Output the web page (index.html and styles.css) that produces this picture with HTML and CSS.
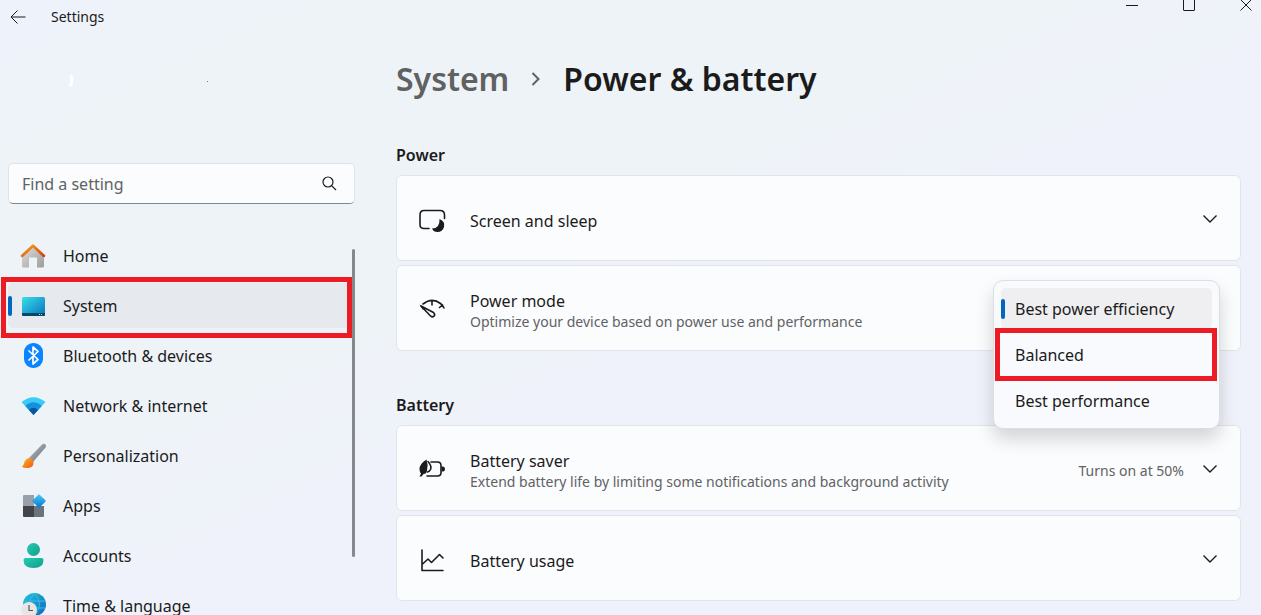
FILE: index.html
```html
<!DOCTYPE html>
<html lang="en">
<head>
    <meta charset="UTF-8">
    <meta name="viewport" content="width=device-width, initial-scale=1.0">
    <title>Settings</title>
    <link rel="stylesheet" href="styles.css">
</head>
<body>
    <header class="titlebar">
        <button class="back-btn" aria-label="Back">
            <svg width="16" height="14" viewBox="0 0 16 14"><path d="M15.500 7H1M7.500 .5L1 7l6.500 6.500" /></svg>
        </button>
        <span class="app-name">Settings</span>
        <div class="window-controls">
            <button aria-label="Minimize"><svg width="12" height="12" viewBox="0 0 12 12"><path d="M0 5.500h12" /></svg></button>
            <button aria-label="Maximize"><svg width="12" height="12" viewBox="0 0 12 12"><rect x=".5" y="-.5" width="11" height="11" rx=".5" /></svg></button>
            <button aria-label="Close"><svg width="12" height="12" viewBox="0 0 12 12"><path d="M.5 -.5l11 11M11.500 -.5l-11 11" /></svg></button>
        </div>
    </header>

    <div class="layout">
        <aside class="sidebar">
            <div class="profile">
                <svg width="200" height="14" viewBox="0 0 200 14" aria-hidden="true">
                    <path d="M62.500 1q3 5-.5 11" fill="none" stroke="#fff" stroke-width="3" />
                    <rect x="199" y="7" width="1" height="1" fill="#777" />
                </svg>
            </div>

            <div class="search">
                <input type="text" placeholder="Find a setting" aria-label="Find a setting">
                <button aria-label="Search">
                    <svg width="15" height="15" viewBox="0 0 15 15"><circle cx="6" cy="6" r="5" /><path d="M9.800 9.800l4.200 4.200" /></svg>
                </button>
            </div>

            <nav class="nav">
                <a class="nav-item" href="#home">
                    <svg width="26" height="26" viewBox="0 0 26 26">
                        <defs>
                            <linearGradient id="wall" x1="0" y1="0" x2="1" y2="1"><stop offset="0" stop-color="#e2e2e2" /><stop offset="1" stop-color="#9b9b9b" /></linearGradient>
                            <linearGradient id="roof" x1="0" y1="0" x2="1" y2="1"><stop offset="0" stop-color="#f6a61c" /><stop offset="1" stop-color="#cf4210" /></linearGradient>
                        </defs>
                        <path d="M2 12L13 2l11 10v11q0 1.500-1.500 1.500H17v-10H9v10H3.500Q2 24.500 2 23z" fill="url(#wall)" />
                        <path d="M2.200 12.800L13 2.800l10.800 10" fill="none" stroke="url(#roof)" stroke-width="2.800" stroke-linecap="round" stroke-linejoin="round" />
                    </svg>
                    Home
                </a>
                <div class="nav-current">
                    <a class="nav-item active" href="#system" aria-current="page">
                        <svg width="26" height="26" viewBox="0 0 26 26">
                            <defs>
                                <linearGradient id="screen" x1="0" y1="0" x2="1" y2="1"><stop offset="0" stop-color="#36dfe9" /><stop offset="1" stop-color="#0c71bd" /></linearGradient>
                            </defs>
                            <rect x="2" y="4" width="23" height="19" rx="1.500" fill="url(#screen)" />
                            <path d="M2 20h23v1.500q0 1.500-1.500 1.500h-20Q2 23 2 21.500z" fill="#074768" />
                            <path d="M19 21h1v1h-1zM21 21h1v1h-1z" fill="#9ee8f5" />
                        </svg>
                        System
                    </a>
                    <div class="highlight"></div>
                </div>
                <a class="nav-item" href="#bluetooth">
                    <svg width="26" height="26" viewBox="0 0 26 26">
                        <rect x="4" y="0" width="19" height="25" rx="9" fill="#0a84ff" />
                        <path d="M9 8l9 8.500-5 4.500V4l5 4.500L9 17" fill="none" stroke="#fff" stroke-width="1.700" stroke-linejoin="round" stroke-linecap="round" />
                    </svg>
                    Bluetooth &amp; devices
                </a>
                <a class="nav-item" href="#network">
                    <svg width="26" height="26" viewBox="0 0 26 26">
                        <path d="M1.500 9Q13.500 -.5 25.500 9L13.500 22z" fill="#3accf5" />
                        <path d="M5.300 13Q13.500 5.500 21.700 13L13.500 22z" fill="#1490df" />
                        <path d="M9 17q4.500-4.500 9 0l-4.500 5z" fill="#0b559f" />
                    </svg>
                    Network &amp; internet
                </a>
                <a class="nav-item" href="#personalization">
                    <svg width="26" height="26" viewBox="0 0 26 26">
                        <defs>
                            <linearGradient id="handle" x1="0" y1="0" x2="1" y2="1"><stop offset="0" stop-color="#c2c7ce" /><stop offset="1" stop-color="#5f6670" /></linearGradient>
                            <linearGradient id="bristle" x1="0" y1="0" x2="1" y2="1"><stop offset="0" stop-color="#fdbd22" /><stop offset="1" stop-color="#ee5519" /></linearGradient>
                        </defs>
                        <path d="M8.500 15.500L22 1.500q2-1.500 3.500 0 1 1.500 0 3L13 19q-1-3-4.500-3.500z" fill="url(#handle)" />
                        <path d="M9.500 15q4 .5 4 4.500 0 5-5.500 5.500-3.500.5-6.500-1.500 2-.5 2.500-3 1-5 5.500-5.500z" fill="url(#bristle)" />
                    </svg>
                    Personalization
                </a>
                <a class="nav-item" href="#apps">
                    <svg width="26" height="26" viewBox="0 0 26 26">
                        <defs>
                            <linearGradient id="tile" x1="0" y1="0" x2="1" y2="1"><stop offset="0" stop-color="#45d0f4" /><stop offset="1" stop-color="#0872d4" /></linearGradient>
                        </defs>
                        <path d="M3 3q0-1 1-1h10v11H3z" fill="#98a1aa" />
                        <path d="M3 13h11v11H4q-1 0-1-1z" fill="#414549" />
                        <path d="M14 13h10v10q0 1-1 1h-9z" fill="#6b737c" />
                        <rect x="14" y="3" width="10" height="10" rx="1" transform="rotate(45 19 8)" fill="url(#tile)" />
                    </svg>
                    Apps
                </a>
                <a class="nav-item" href="#accounts">
                    <svg width="26" height="26" viewBox="0 0 26 26">
                        <defs>
                            <linearGradient id="person" x1="0" y1="0" x2="1" y2="1"><stop offset="0" stop-color="#25cbb4" /><stop offset="1" stop-color="#109f87" /></linearGradient>
                        </defs>
                        <circle cx="13.500" cy="6.500" r="6.500" fill="url(#person)" />
                        <path d="M5.500 15h16q2 0 2 2 0 8-10 8t-10-8q0-2 2-2z" fill="url(#person)" />
                    </svg>
                    Accounts
                </a>
                <a class="nav-item" href="#time">
                    <svg width="26" height="26" viewBox="0 0 26 26">
                        <defs>
                            <linearGradient id="globe" x1="0" y1="0" x2="1" y2="1"><stop offset="0" stop-color="#25c4dc" /><stop offset="1" stop-color="#0e66bd" /></linearGradient>
                        </defs>
                        <circle cx="14.500" cy="11.500" r="11.500" fill="url(#globe)" />
                        <path d="M4 8h21M4 15h21M14.500 0q-10 11.500 0 23M14.500 0q10 11.500 0 23" fill="none" stroke="#35bfe0" />
                        <circle cx="9" cy="17" r="8" fill="#e6e6e6" />
                        <path d="M9 12v5.500h4" fill="none" stroke="#555" stroke-width="1.200" />
                    </svg>
                    Time &amp; language
                </a>
                <div class="scroll-thumb"></div>
            </nav>
        </aside>

        <main class="content">
            <h1 class="breadcrumb">
                <a href="#system">System</a>
                <svg width="10" height="14" viewBox="0 0 10 14" aria-hidden="true"><path d="M1.500 1l6 6-6 6" /></svg>
                <span>Power &amp; battery</span>
            </h1>

            <section class="group">
                <h2>Power</h2>
                <button class="card">
                    <svg class="card-icon" width="28" height="28" viewBox="0 0 28 28">
                        <path d="M11 21.500H6Q2 21.500 2 17.500V8q0-4.500 4-4.500h16q4.500 0 4.500 4.500v3.500" />
                        <path d="M21.500 12q6 2.500 4.500 8-1.500 5-6.500 5-4 0-5.500-3.500 8 0 7.500-9.500z" class="solid" />
                    </svg>
                    <span class="card-text"><span class="card-title">Screen and sleep</span></span>
                    <svg class="chevron" width="14" height="8" viewBox="0 0 14 8"><path d="M.5 .5L7 7l6.500-6.500" /></svg>
                </button>
                <div class="card">
                    <svg class="card-icon" width="28" height="28" viewBox="0 0 28 28">
                        <path d="M5 7Q14 0 22.500 6.500q2 1.500 3.500 4.500M14 3.500V8M24.500 8l-3 2.500" />
                        <path d="M3 9l12.500 6.500q2 2 .5 3.700-2 1.500-3.700-.5z" />
                        <path d="M1.500 7.500l3 5L9 12z" class="solid" />
                    </svg>
                    <div class="card-text">
                        <span class="card-title">Power mode</span>
                        <span class="card-desc">Optimize your device based on power use and performance</span>
                    </div>
                    <div class="menu" role="listbox" aria-label="Power mode">
                        <button class="option selected" role="option" aria-selected="true">Best power efficiency</button>
                        <button class="option" role="option" aria-selected="false">Balanced</button>
                        <button class="option" role="option" aria-selected="false">Best performance</button>
                        <div class="highlight"></div>
                    </div>
                </div>
            </section>

            <section class="group">
                <h2>Battery</h2>
                <button class="card">
                    <svg class="card-icon" width="28" height="28" viewBox="0 0 28 28">
                        <path d="M13 5h6.500Q23 5 23 8.500v7q0 3.500-3.500 3.500H9" />
                        <path d="M23.500 9.500H25q2 0 2 2.500t-2 2.500h-1.500z" class="solid" />
                        <path d="M8.500 2.500Q1.500 7 1.500 12q0 3 1.500 4.500L1.500 19.500h2l2-2.500q3 0 3.500-3.500Q10.500 8 8.500 2.500z" class="solid" />
                        <path d="M10 4.500q4 4.500 2.500 8-1 2-3 2.500" />
                    </svg>
                    <span class="card-text">
                        <span class="card-title">Battery saver</span>
                        <span class="card-desc">Extend battery life by limiting some notifications and background activity</span>
                    </span>
                    <span class="card-value">Turns on at 50%</span>
                    <svg class="chevron" width="14" height="8" viewBox="0 0 14 8"><path d="M.5 .5L7 7l6.500-6.500" /></svg>
                </button>
                <button class="card">
                    <svg class="card-icon" width="28" height="28" viewBox="0 0 28 28">
                        <path d="M4 3v20.500h21M4 17.500l6-5.500 3.500 3.500L21.500 7.500l3.500 3.500" />
                    </svg>
                    <span class="card-text"><span class="card-title">Battery usage</span></span>
                    <svg class="chevron" width="14" height="8" viewBox="0 0 14 8"><path d="M.5 .5L7 7l6.500-6.500" /></svg>
                </button>
            </section>
        </main>
    </div>
</body>
</html>
```
FILE: styles.css
```css
* {
    box-sizing: border-box;
}

body {
    display: flex;
    flex-direction: column;
    height: 100vh;
    margin: 0;
    overflow: hidden;
    font-family: "Noto Sans", "Open Sans", sans-serif;
    font-size: 16px;
    color: #1b1b1b;
    background: linear-gradient(155deg, #eef2fb 0%, #eef3f8 14%, #eef3f8 40%, #eff2fa 55%, #eff2fb 100%);
}

button {
    padding: 0;
    border: none;
    background: none;
    font: inherit;
    color: inherit;
    text-align: left;
}

a {
    color: inherit;
    text-decoration: none;
}

.titlebar {
    display: flex;
    flex-shrink: 0;
    align-items: center;
    height: 35px;
    padding: 0 9px 2px 10px;
}

.titlebar svg {
    display: block;
    fill: none;
    stroke: #1b1b1b;
}

.app-name {
    margin-left: 25px;
    font-size: 14px;
}

.window-controls {
    display: flex;
    align-self: flex-start;
    gap: 45px;
    margin-left: auto;
}

.layout {
    display: grid;
    grid-template-columns: 355px 1fr;
    flex: 1;
    min-height: 0;
}

/* Sidebar */
.sidebar {
    display: flex;
    flex-direction: column;
    min-height: 0;
    padding-left: 8px;
}

.profile {
    flex-shrink: 0;
    height: 128px;
    padding-top: 36px;
}

.search {
    display: flex;
    align-items: center;
    flex-shrink: 0;
    height: 41px;
    padding: 0 17px 0 13px;
    border: 1px solid #dfe3e7;
    border-bottom-color: #85888b;
    border-radius: 5px;
    background: #fbfcfe;
}

.search input {
    flex: 1;
    min-width: 0;
    padding: 0;
    border: none;
    outline: none;
    background: none;
    font: inherit;
}

.search input::placeholder {
    color: #616263;
    opacity: 1;
}

.search svg {
    display: block;
    fill: none;
    stroke: #1b1b1b;
    stroke-width: 1.2;
}

.nav {
    position: relative;
    display: flex;
    flex-direction: column;
    gap: 5px;
    margin-top: 29px;
    padding-right: 4px;
}

.nav-item {
    display: flex;
    flex-shrink: 0;
    align-items: center;
    gap: 17px;
    height: 45px;
    padding-left: 12px;
    border-radius: 5px;
}

.nav-item.active {
    background: #e6e9ee;
}

.nav-current {
    position: relative;
}

.nav-item.active::before,
.option.selected::before {
    content: "";
    position: absolute;
    left: 0;
    width: 4px;
    height: 20px;
    border-radius: 2px;
    background: #0067c0;
}

.scroll-thumb {
    position: absolute;
    top: 16px;
    right: 0;
    width: 3px;
    height: 308px;
    border-radius: 2px;
    background: #85898d;
}

.highlight {
    position: absolute;
    border: 5px solid #ed1c24;
    pointer-events: none;
}

.nav-current .highlight {
    inset: -6px -1px -10px -7px;
}

/* Content */
.content {
    min-width: 0;
    padding: 22px 20px 0 41px;
}

.breadcrumb {
    display: flex;
    align-items: center;
    gap: 22px;
    margin: 0;
    font-size: 32px;
    font-weight: 600;
    line-height: 44px;
}

.breadcrumb a {
    color: #5f6163;
}

.breadcrumb svg {
    fill: none;
    stroke: #5f6163;
    stroke-width: 2;
}

.group {
    display: flex;
    flex-direction: column;
    gap: 4px;
    margin-top: 42px;
}

.group h2 {
    margin: 0 0 4px;
    font-size: 16px;
    font-weight: 600;
    line-height: 24px;
}

.card {
    position: relative;
    display: flex;
    align-items: center;
    width: 100%;
    min-height: 86px;
    padding: 5px 23px 0 21px;
    border: 1px solid #e1e5eb;
    border-radius: 6px;
    background: #fbfcfe;
}

.card-icon {
    flex-shrink: 0;
    fill: none;
    stroke: #1b1b1b;
    stroke-width: 1.6;
    stroke-linecap: round;
    stroke-linejoin: round;
}

.card-icon .solid {
    fill: #1b1b1b;
    stroke: none;
}

.card-text {
    display: flex;
    flex: 1;
    flex-direction: column;
    min-width: 0;
    margin-left: 24px;
}

.card-title {
    line-height: 22px;
}

.card-desc,
.card-value {
    font-size: 14px;
    line-height: 20px;
    color: #616263;
}

.chevron {
    flex-shrink: 0;
    margin: 0 0 4px 19px;
    fill: none;
    stroke: #1b1b1b;
    stroke-width: 1.4;
}

/* Power mode drop-down */
.menu {
    position: absolute;
    top: 14px;
    right: 20px;
    z-index: 1;
    display: flex;
    flex-direction: column;
    gap: 5px;
    width: 227px;
    padding: 7px;
    border: 1px solid #dcdee2;
    border-radius: 10px;
    background: #f9fafd;
    box-shadow: 0 10px 18px rgba(0, 0, 0, 0.16);
}

.option {
    position: relative;
    display: flex;
    align-items: center;
    height: 41px;
    padding-left: 14px;
    border-radius: 5px;
}

.option.selected {
    background: #efeff1;
}

.menu .highlight {
    inset: 47px 2px 47px 1px;
}
```
